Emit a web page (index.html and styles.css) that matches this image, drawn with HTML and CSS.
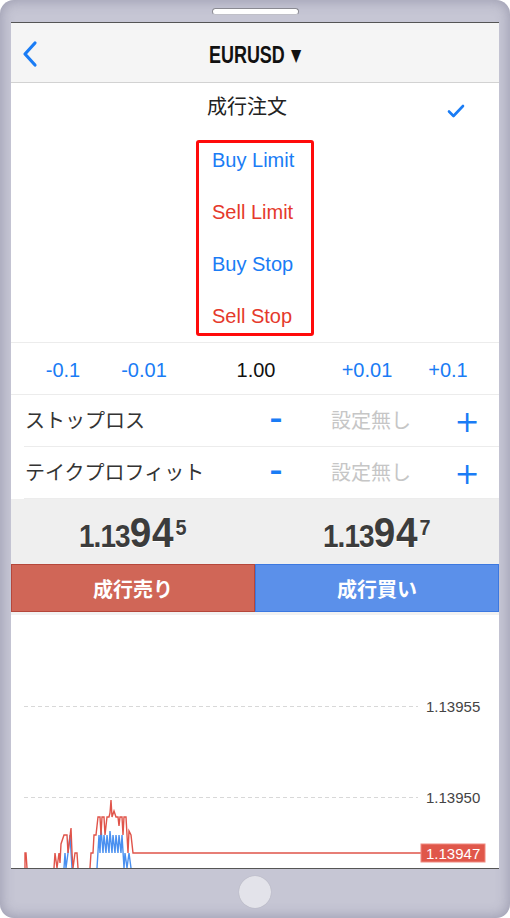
FILE: index.html
```html
<!DOCTYPE html>
<html>
<head>
    <title>EURUSD 注文</title>
    <link rel="stylesheet" href="styles.css">
</head>
<body>
    <div class="phone">
        <div class="phone-top"><span class="speaker"></span></div>

        <div class="screen">
            <div class="nav">
                <svg class="back" width="18" height="28" viewBox="0 0 18 28">
                    <path d="M14 3 L4 14 L14 25" fill="none" stroke="#1a7cf5" stroke-width="3.2" stroke-linecap="round" stroke-linejoin="round"/>
                </svg>
                <div class="title">EURUSD<span class="caret">&#9660;</span></div>
            </div>

            <div class="order-types">
                <div class="type-row first"><span class="market">成行注文</span>
                    <svg class="check" width="18" height="14" viewBox="0 0 18 14">
                        <path d="M2 7.5 L6.5 12 L16 2" fill="none" stroke="#1a7cf5" stroke-width="2.6" stroke-linecap="round" stroke-linejoin="round"/>
                    </svg>
                </div>
                <div class="type-row buy">Buy Limit</div>
                <div class="type-row sell">Sell Limit</div>
                <div class="type-row buy">Buy Stop</div>
                <div class="type-row sell">Sell Stop</div>
                <div class="highlight"></div>
            </div>

            <div class="lot-row">
                <span class="step">-0.1</span>
                <span class="step">-0.01</span>
                <span class="lot">1.00</span>
                <span class="step">+0.01</span>
                <span class="step">+0.1</span>
            </div>

            <div class="level-row">
                <span class="level-name">ストップロス</span>
                <span class="minus">-</span>
                <span class="level-value">設定無し</span>
                <span class="plus">+</span>
            </div>
            <div class="level-row">
                <span class="level-name">テイクプロフィット</span>
                <span class="minus">-</span>
                <span class="level-value">設定無し</span>
                <span class="plus">+</span>
            </div>

            <div class="quotes">
                <div class="quote-cell"><span class="quote"><span class="small">1.13</span><span class="big">94</span><sup>5</sup></span></div>
                <div class="quote-cell"><span class="quote"><span class="small">1.13</span><span class="big">94</span><sup>7</sup></span></div>
            </div>

            <div class="trade-buttons">
                <div class="btn btn-sell">成行売り</div>
                <div class="btn btn-buy">成行買い</div>
            </div>

            <div class="chart">
                <svg width="488" height="253" viewBox="11 614 488 253">
                    <line x1="24" y1="705.5" x2="418" y2="705.5" stroke="#d8d8d8" stroke-dasharray="4 3"/>
                    <line x1="24" y1="796.5" x2="418" y2="796.5" stroke="#d8d8d8" stroke-dasharray="4 3"/>
                    <text x="426" y="711" class="axis">1.13955</text>
                    <text x="426" y="802" class="axis">1.13950</text>

                    <polyline fill="none" stroke="#4a90f0" stroke-width="1.4" points="64,867 65,852 66,867 68,852 70,834 72,867 73,867"/>
                    <polyline fill="none" stroke="#4a90f0" stroke-width="1.4" points="97,867 99,834 100,852 101,827 103,852 104,834 106,852 107,834 109,852 110,830 112,852 113,834 115,852 116,834 118,852 119,834 121,852 122,834 124,867 125,852 127,867 129,852 131,867"/>

                    <polyline fill="none" stroke="#e0544a" stroke-width="1.4" points="25,867 25,852 26,852 27,867"/>
                    <polyline fill="none" stroke="#e0544a" stroke-width="1.4" points="54,867 55,852 57,867 59,852 60,862 61,843 64,834 67,834 68,852 71,827 72,852 73,867 75,852 77,852 78,867"/>
                    <polyline fill="none" stroke="#e0544a" stroke-width="1.4" points="90,867 91,852 93,852 94,834 96,834 98,816 100,816 101,834 102,816 104,816 105,834 107,816 109,816 110,812 111,799 112,816 114,810 116,816 118,816 119,825 120,816 122,816 123,834 124,816 126,816 128,852 129,830 131,834 133,852 135,852 421,852"/>

                    <rect x="421" y="843" width="64" height="18" fill="#e0574a" stroke="#f08a80" stroke-width="1"/>
                    <text x="426" y="858" class="axis price">1.13947</text>
                </svg>
            </div>
        </div>

        <div class="phone-bottom"><span class="home"></span></div>
    </div>
</body>
</html>
```

FILE: styles.css
```css
body {
    margin: 0;
    background: #ffffff;
    font-family: "Liberation Sans", "Noto Sans CJK JP", sans-serif;
}
.phone {
    width: 510px;
    height: 918px;
    box-sizing: border-box;
    border-radius: 14px;
    background: #c6c6d4;
    box-shadow: inset 0 0 14px rgba(90, 90, 120, 0.45);
    display: flex;
    flex-direction: column;
    align-items: center;
}
.phone-top {
    height: 22px;
    display: flex;
    justify-content: center;
    align-items: flex-start;
}
.speaker {
    margin-top: 8px;
    width: 87px;
    height: 7px;
    box-sizing: border-box;
    border-radius: 4px;
    background: #ffffff;
    border: 1px solid #8a8a92;
    border-bottom-color: #c0c0c8;
}
.screen {
    width: 488px;
    background: #ffffff;
    border-top: 1px solid #555;
    border-bottom: 1px solid #555;
}
.phone-bottom {
    flex: 1;
    display: flex;
    justify-content: center;
    align-items: flex-start;
}
.home {
    margin-top: 7px;
    width: 32px;
    height: 32px;
    border-radius: 50%;
    background: #e3e3ea;
    box-shadow: 0 0 1px rgba(0, 0, 0, 0.2);
}

/* nav */
.nav {
    height: 59px;
    background: #f5f5f5;
    border-bottom: 1px solid #d2d2d2;
    display: flex;
    align-items: center;
    justify-content: center;
    position: relative;
}
.back {
    position: absolute;
    left: 10px;
    top: 17px;
}
.title {
    font-family: "Liberation Sans", sans-serif;
    font-weight: bold;
    font-size: 23px;
    color: #111;
    transform: scaleX(0.78);
    margin-top: 6px;
}
.caret {
    font-family: "DejaVu Sans", sans-serif;
    font-size: 17px;
    position: relative;
    top: -2px;
    margin-left: 8px;
}

/* order types */
.order-types {
    position: relative;
    border-bottom: 1px solid #ececec;
}
.type-row {
    height: 52px;
    display: flex;
    align-items: center;
    padding-left: 201px;
    font-size: 20px;
}
.type-row.first {
    height: 51px;
    padding-left: 196px;
    padding-right: 34px;
    justify-content: space-between;
    color: #222;
    font-family: "Noto Sans CJK JP", sans-serif;
    font-size: 20px;
}
.market {
    position: relative;
    top: -3px;
}
.check {
    margin-top: 4px;
}
.buy {
    color: #1a7cf5;
}
.sell {
    color: #e5392b;
}
.highlight {
    position: absolute;
    left: 185px;
    top: 57px;
    width: 118px;
    height: 196px;
    box-sizing: border-box;
    border: 3px solid #ff0a0a;
    border-radius: 3px;
}

/* lots */
.lot-row {
    height: 51px;
    display: grid;
    grid-template-columns: 80px 82px 142px 80px 82px;
    padding-left: 12px;
    align-items: center;
    justify-items: center;
    font-size: 20px;
    color: #1a7cf5;
    border-bottom: 1px solid #ececec;
}
.lot-row span {
    margin-top: 3px;
}
.lot {
    color: #111;
}

/* stop loss / take profit */
.level-row {
    height: 51px;
    margin-left: 13px;
    display: grid;
    grid-template-columns: 235px 32px 158px 34px;
    padding-left: 1px;
    align-items: center;
    justify-items: center;
    border-bottom: 1px solid #ececec;
    font-family: "Noto Sans CJK JP", sans-serif;
}
.level-row:last-of-type {
    border-bottom: none;
}
.level-name {
    justify-self: start;
    font-size: 20px;
    color: #333;
    margin-top: -2px;
}
.minus {
    font-family: "Liberation Sans", sans-serif;
    font-weight: bold;
    font-size: 30px;
    color: #1a7cf5;
    transform: scaleX(1.3);
    margin-top: -6px;
}
.level-value {
    font-size: 20px;
    color: #c6c6c6;
    margin-top: -2px;
}
.plus {
    font-family: "DejaVu Sans", sans-serif;
    font-size: 30px;
    color: #1a7cf5;
    margin-top: 2px;
}

/* quotes */
.quotes {
    height: 65px;
    background: #efefef;
    display: grid;
    grid-template-columns: 1fr 1fr;
    align-items: center;
}
.quote-cell {
    display: flex;
    justify-content: center;
}
.quote {
    display: inline-block;
    font-family: "Liberation Sans", sans-serif;
    font-weight: bold;
    color: #3c3c3c;
    text-shadow: 0 1px 0 #ffffff;
    transform: scaleX(0.9);
    padding-top: 2px;
    white-space: nowrap;
}
.small {
    font-size: 31px;
    letter-spacing: -1px;
}
.big {
    font-size: 43px;
    letter-spacing: 1px;
}
.quote sup {
    font-size: 22px;
    position: relative;
    top: -6px;
    margin-left: 1px;
}

/* buttons */
.trade-buttons {
    display: grid;
    grid-template-columns: 244px 244px;
    height: 48px;
}
.btn {
    display: flex;
    align-items: center;
    justify-content: center;
    color: #ffffff;
    font-family: "Noto Sans CJK JP", sans-serif;
    font-weight: bold;
    font-size: 20px;
    box-sizing: border-box;
}
.btn-sell {
    background: #d06657;
    border: 1px solid #b5473b;
}
.btn-buy {
    background: #5b90ea;
    border: 1px solid #3c78e0;
}

/* chart */
.chart {
    border-top: 3px solid #f2f2f2;
    height: 253px;
}
.chart svg {
    display: block;
}
.axis {
    font-family: "Liberation Sans", sans-serif;
    font-size: 15px;
    fill: #444;
}
.axis.price {
    fill: #ffffff;
}
```
